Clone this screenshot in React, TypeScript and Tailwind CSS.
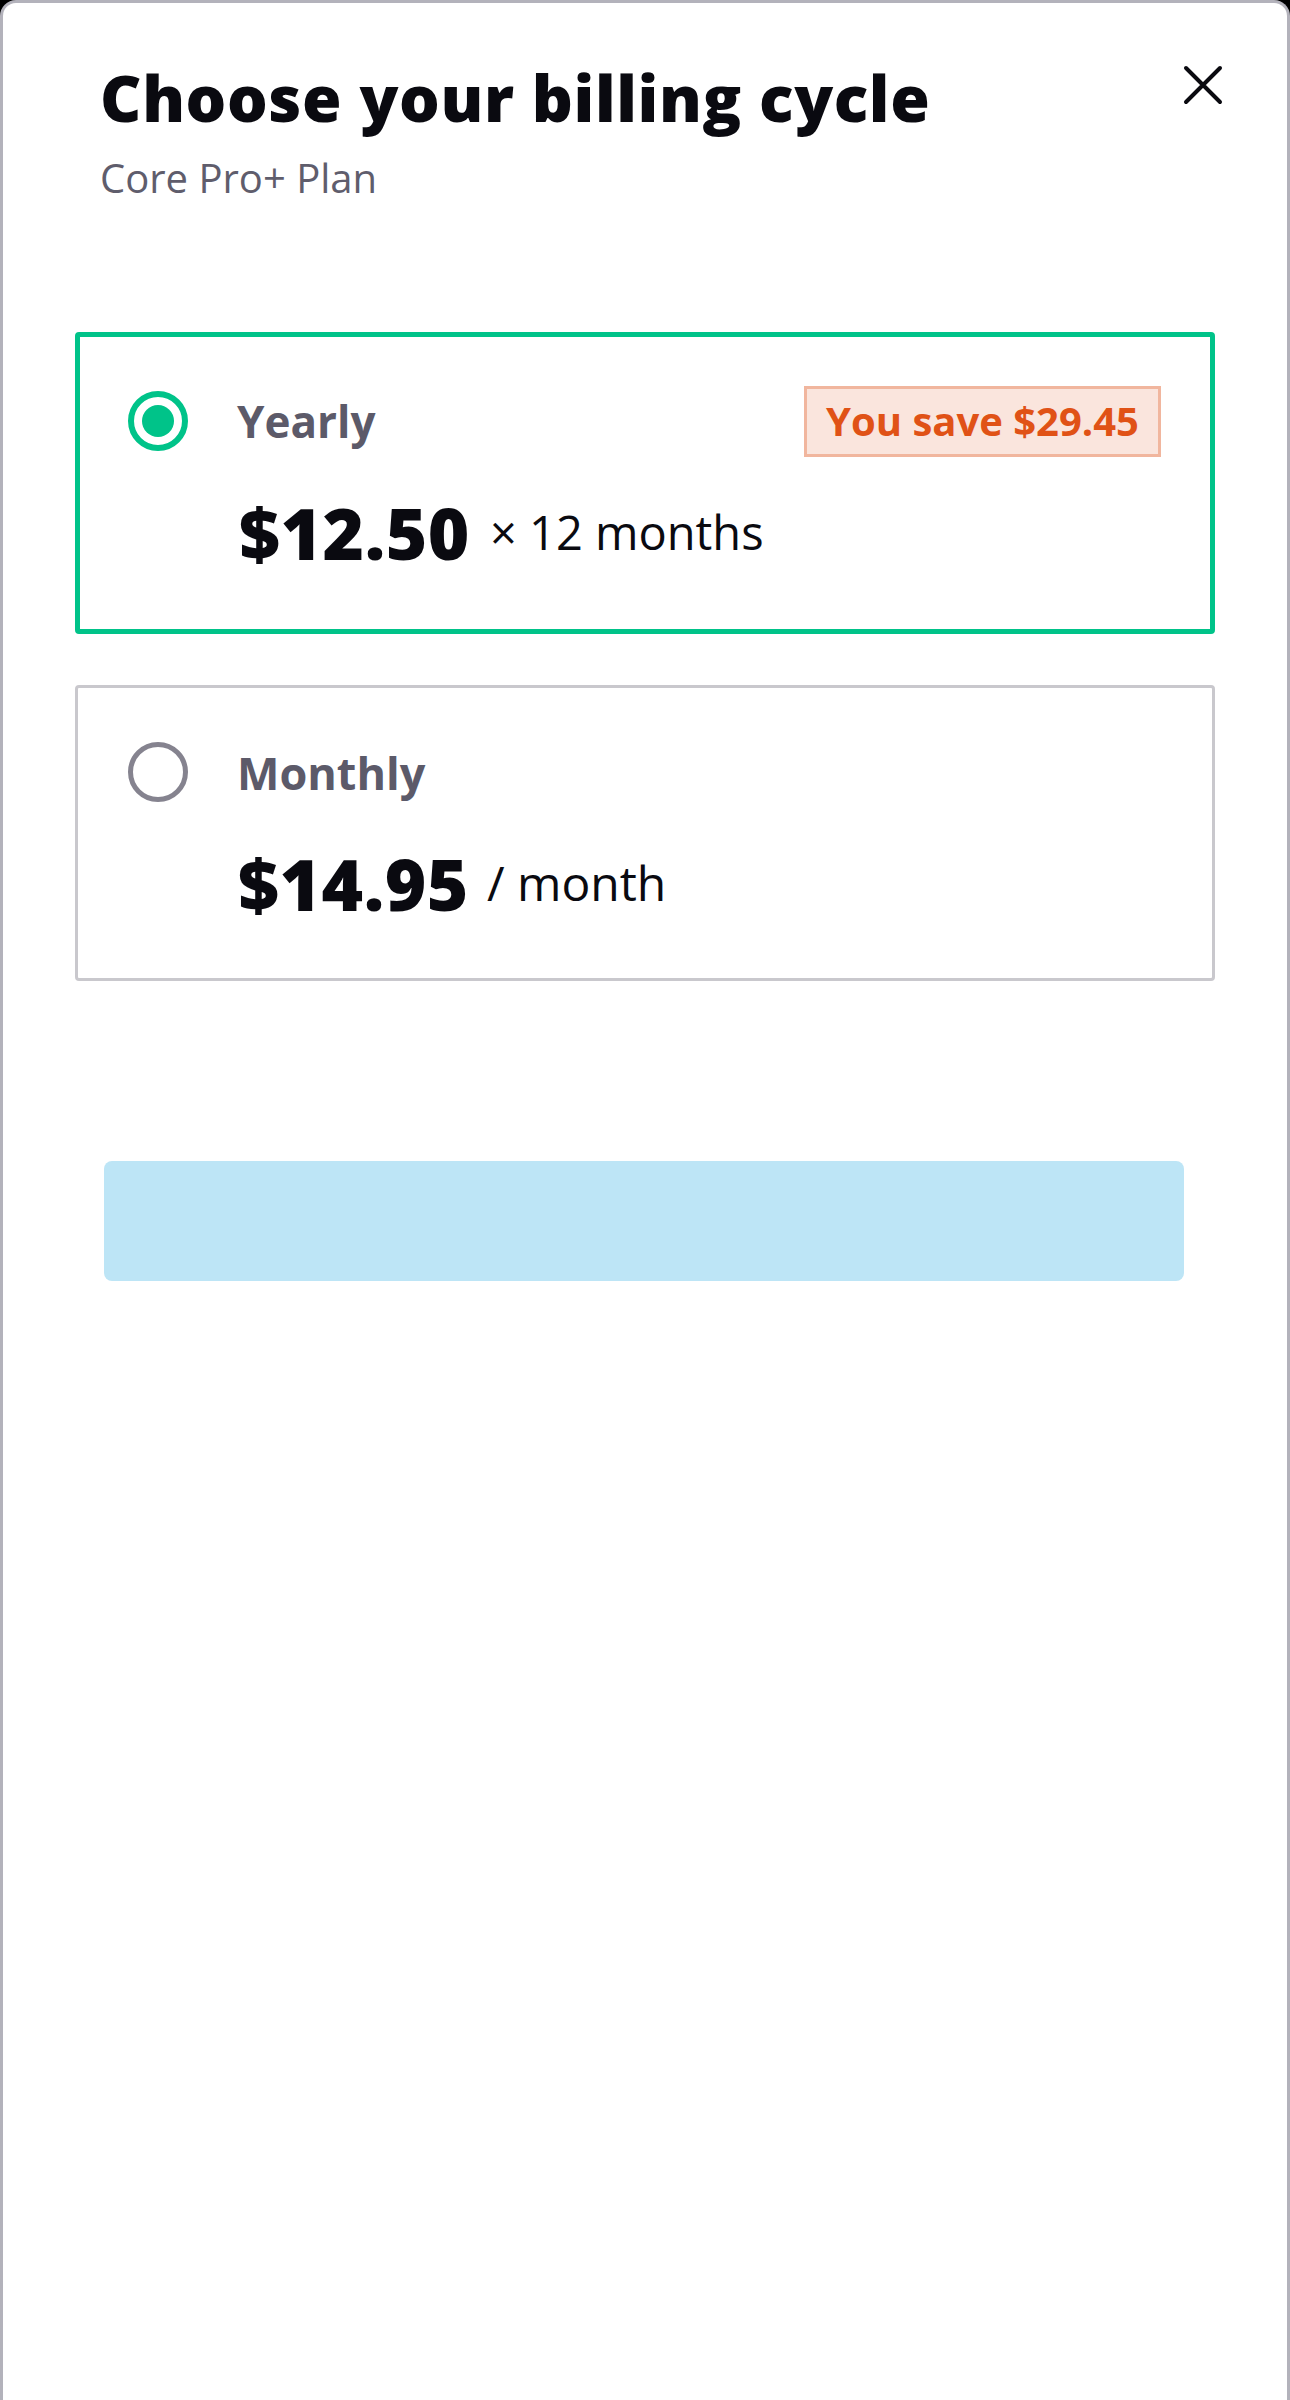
import React from "react";

function Radio({ checked }: { checked: boolean }) {
  return checked ? (
    <div className="w-[60px] h-[60px] rounded-full border-[6px] border-[#00c389] flex items-center justify-center shrink-0">
      <div className="w-[32px] h-[32px] rounded-full bg-[#00c389]" />
    </div>
  ) : (
    <div className="w-[60px] h-[60px] rounded-full border-[5px] border-[#85838f] shrink-0" />
  );
}

export default function App() {
  return (
    <div className="min-h-[2400px] bg-black font-['Open_Sans',sans-serif]">
      <div className="h-[2400px] bg-white border-[3px] border-b-0 border-[#b3b2bb] rounded-t-[16px]">
        <div className="flex justify-between items-start pl-[97px] pr-[64px] pt-[63px]">
          <div className="flex flex-col">
            <h1 className="text-[64px] leading-none font-extrabold text-[#0a0a10] tracking-[0.6px]">
              Choose your billing cycle
            </h1>
            <p className="mt-[28px] text-[40px] leading-none text-[#5f5d6c]">Core Pro+ Plan</p>
          </div>
          <button className="mt-[-1px] w-[40px] h-[40px]" aria-label="Close">
            <svg width="40" height="40" viewBox="0 0 40 40">
              <path d="M3 3 L37 37 M37 3 L3 37" stroke="#0a0a10" strokeWidth="4" strokeLinecap="round" />
            </svg>
          </button>
        </div>

        <div className="mx-[72px] mt-[134px] flex flex-col">
          <div className="border-[5px] border-[#00c389] rounded-[4px] pl-[48px] pr-[49px] pt-[54px] pb-[65px]">
            <div className="h-[60px] flex items-center justify-between">
              <div className="flex items-center gap-[49px]">
                <Radio checked />
                <span className="text-[44px] leading-none font-bold text-[#5c5a69]">Yearly</span>
              </div>
              <div className="h-[71px] flex items-center border-[3px] border-[#f1b69e] bg-[#fae5dd] px-[19px]">
                <span className="text-[40px] leading-none font-bold text-[#e05216]">You save $29.45</span>
              </div>
            </div>
            <div className="mt-[49px] ml-[111px] flex items-center h-[64px]">
              <span className="text-[71px] leading-none font-extrabold text-[#0a0a10] tracking-[0.5px]">$12.50</span>
              <span className="ml-[20px] text-[47px] leading-none text-[#0a0a10]">× 12 months</span>
            </div>
          </div>

          <div className="mt-[51px] border-[3px] border-[#c9c8cd] rounded-[4px] pl-[50px] pr-[49px] pt-[54px] pb-[63px]">
            <div className="h-[60px] flex items-center">
              <div className="flex items-center gap-[49px]">
                <Radio checked={false} />
                <span className="text-[45px] leading-none font-bold text-[#5c5a69]">Monthly</span>
              </div>
            </div>
            <div className="mt-[49px] ml-[110px] flex items-center h-[64px]">
              <span className="text-[71px] leading-none font-extrabold text-[#0a0a10] tracking-[0.5px]">$14.95</span>
              <span className="ml-[18px] text-[48px] leading-none text-[#0a0a10]">/ month</span>
            </div>
          </div>
        </div>

        <div className="ml-[101px] mr-[103px] mt-[180px] h-[120px] rounded-[8px] bg-[#bde5f6]" />
      </div>
    </div>
  );
}
